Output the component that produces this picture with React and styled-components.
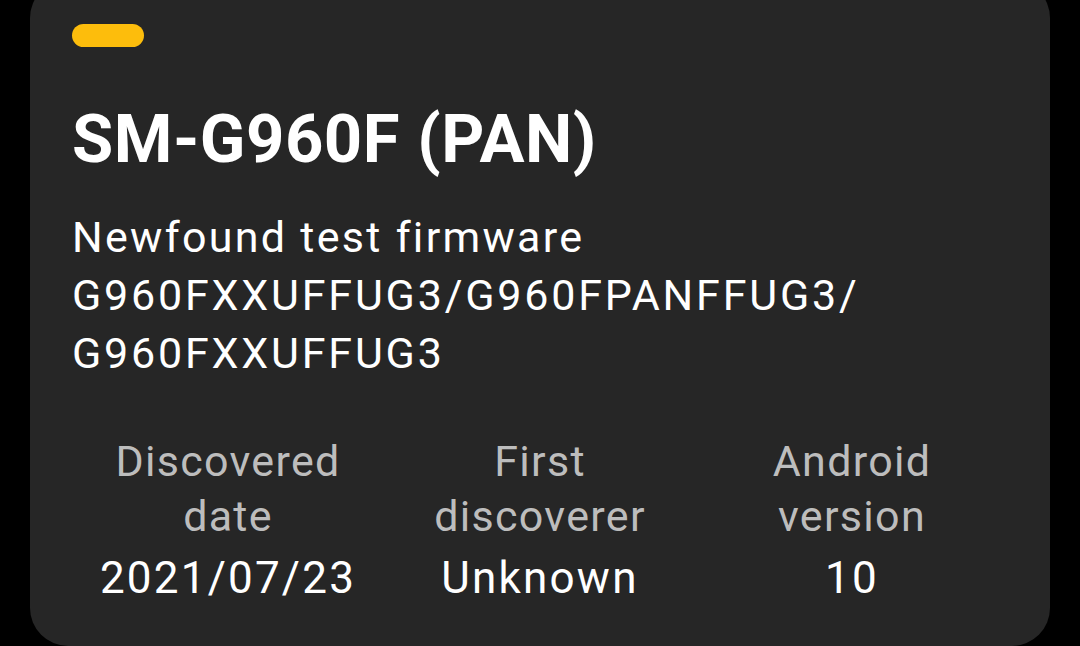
import React from 'react'
import styled, { createGlobalStyle } from 'styled-components'

const GlobalStyle = createGlobalStyle`
  html, body {
    margin: 0;
    padding: 0;
    background: #000;
    overflow: hidden;
  }
  body {
    font-family: Roboto, "Noto Sans", sans-serif;
  }
`

const Page = styled.div`
  width: 1080px;
  height: 646px;
  padding: 0 30px;
  box-sizing: border-box;
  overflow: hidden;
`

const Card = styled.div`
  background: #262626;
  border-radius: 38px;
  margin-top: -20px;
  height: 666px;
  box-sizing: border-box;
  padding: 44px 42px 0 42px;
  display: flex;
  flex-direction: column;
`

const Tag = styled.div`
  width: 72px;
  height: 23px;
  border-radius: 12px;
  background: #fdbd0c;
`

const Title = styled.h1`
  margin: 52px 0 0 0;
  color: #fff;
  font-size: 67px;
  font-weight: 700;
  line-height: 80px;
  letter-spacing: 0.5px;
`

const Text = styled.div`
  color: #fff;
  font-size: 43px;
  line-height: 58px;
  letter-spacing: ${p => p.$spacing || '2px'};
`

const Subtitle = styled(Text)`
  margin-top: 29px;
`

const Stats = styled.div`
  display: grid;
  grid-template-columns: repeat(3, 1fr);
  margin-top: 52px;
`

const Stat = styled.div`
  display: flex;
  flex-direction: column;
  align-items: center;
  text-align: center;
`

const Label = styled.div`
  color: #bdbdbd;
  font-size: 43px;
  line-height: 55px;
  letter-spacing: 1.3px;
`

const Value = styled.div`
  color: #fff;
  font-size: 44px;
  line-height: 68px;
  letter-spacing: 2.2px;
`

const stats = [
  { label: ['Discovered', 'date'], value: '2021/07/23' },
  { label: ['First', 'discoverer'], value: 'Unknown' },
  { label: ['Android', 'version'], value: '10' },
]

export default function App() {
  return (
    <Page>
      <GlobalStyle />
      <Card>
        <Tag />
        <Title>SM-G960F (PAN)</Title>
        <Subtitle $spacing="2.3px">Newfound test firmware</Subtitle>
        <Text $spacing="2.8px">G960FXXUFFUG3/G960FPANFFUG3/<br />G960FXXUFFUG3</Text>
        <Stats>
          {stats.map((s, i) => (
            <Stat key={i}>
              <Label>{s.label[0]}<br />{s.label[1]}</Label>
              <Value>{s.value}</Value>
            </Stat>
          ))}
        </Stats>
      </Card>
    </Page>
  )
}
